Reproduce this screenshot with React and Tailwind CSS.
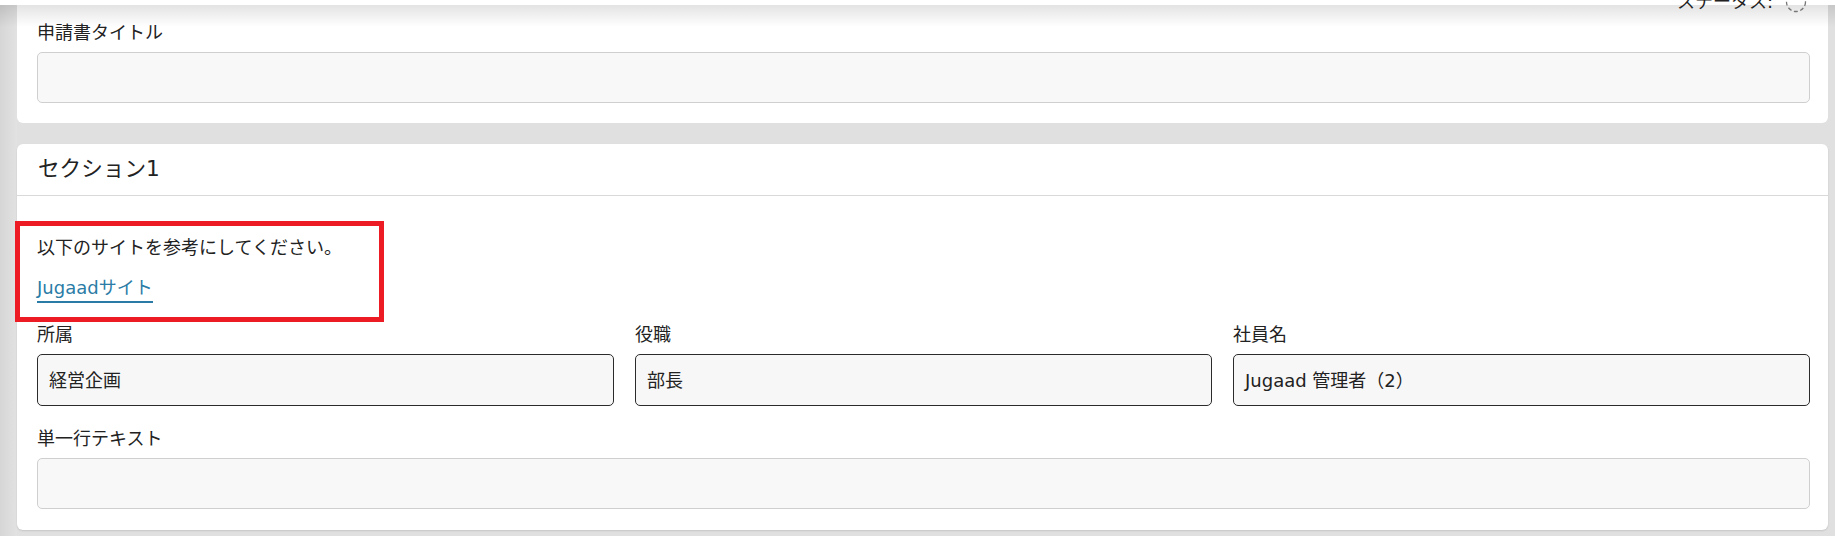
import React from 'react'

// Read-only field (dark outline) vs empty input (light outline)
function Field({ label, value, readOnly }) {
  return (
    <div className="flex flex-col">
      <div className="text-[18px] leading-[27px] text-[#222]">{label}</div>
      <div
        className={
          readOnly
            ? 'mt-[6px] h-[52px] rounded-[5px] border border-[#2b2b2b] bg-[#f7f7f7] px-[11px] flex items-center text-[18px] text-[#222]'
            : 'mt-[6px] h-[51px] rounded-[5px] border border-[#cfcfcf] bg-[#f8f8f8] px-[11px] flex items-center text-[18px] text-[#222]'
        }
      >
        {value}
      </div>
    </div>
  )
}

export default function App() {
  return (
    <div className="relative h-[536px] w-[1835px] overflow-hidden bg-[#e0e0e0] font-['DejaVu_Sans','Noto_Sans_CJK_JP',sans-serif]">
      {/* left gutter */}
      <div className="absolute left-0 top-0 h-full w-[17px] bg-gradient-to-r from-[#d6d6d6] to-[#e2e2e2]" />

      <div className="relative ml-[17px] mr-[7px] flex flex-col gap-[21px]">
        {/* card 1 */}
        <div className="rounded-b-[6px] bg-white pl-[20px] pr-[18px] pt-[19px] pb-[20px]">
          <Field label="申請書タイトル" value="" />
        </div>

        {/* card 2 */}
        <div className="rounded-[6px] bg-white shadow-[0_1px_2px_rgba(0,0,0,0.12)]">
          <div className="flex h-[52px] items-center border-b border-[#d9d9d9] pl-[21px] text-[21.6px] text-[#222]">
            セクション1
          </div>
          <div className="pl-[20px] pr-[18px] pt-[38px] pb-[21px]">
            <div className="text-[18px] leading-[27px] text-[#222]">以下のサイトを参考にしてください。</div>
            <div className="mt-[16px] leading-none">
              <a className="inline-block border-b-2 border-[#2a7ca6] pb-[3px] text-[18px] leading-[21px] text-[#2a7ca6]">
                Jugaadサイト
              </a>
            </div>
            <div className="mt-[18px] grid grid-cols-3 gap-x-[21px]">
              <Field label="所属" value="経営企画" readOnly />
              <Field label="役職" value="部長" readOnly />
              <Field label="社員名" value="Jugaad 管理者（2）" readOnly />
            </div>
            <div className="mt-[19px]">
              <Field label="単一行テキスト" value="" />
            </div>
          </div>
        </div>
      </div>

      {/* red annotation frame */}
      <div className="absolute left-[15px] top-[221px] h-[101px] w-[369px] border-[5px] border-[#ed1c24]" />

      {/* sticky header shadow */}
      <div className="absolute left-0 top-0 h-[5px] w-full bg-white" />
      <div className="absolute left-0 top-[5px] h-[22px] w-full bg-gradient-to-b from-[rgba(0,0,0,0.11)] to-transparent" />

      {/* status, cut off by the header */}
      <div className="absolute right-[28px] top-[-10px] flex items-center gap-[12px] text-[18px] leading-[24px] text-[#222]">
        <span>ステータス:</span>
        <svg width="22" height="22" viewBox="0 0 22 22">
          <circle cx="11" cy="11" r="9.5" fill="none" stroke="#777" strokeWidth="1.3" strokeDasharray="4 2.5" />
        </svg>
      </div>
    </div>
  )
}
